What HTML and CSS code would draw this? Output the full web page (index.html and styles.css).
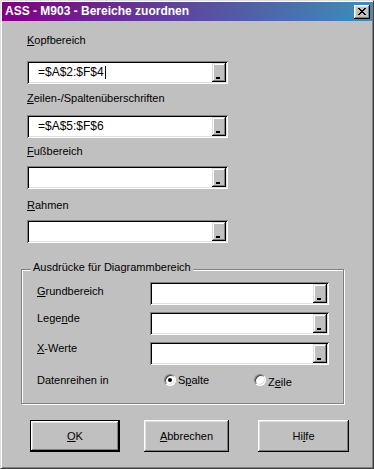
FILE: index.html
```html
<!DOCTYPE html>
<html lang="de">
<head>
  <meta charset="UTF-8">
  <title>ASS - M903 - Bereiche zuordnen</title>
  <link rel="stylesheet" href="styles.css">
</head>
<body>

<div class="window">
  <div class="titlebar">
    <span class="title">ASS - M903 - Bereiche zuordnen</span>
    <span class="close-btn">
      <svg width="8" height="7" viewBox="0 0 8 7">
        <path d="M0 0h2v1h-2z M6 0h2v1h-2z M1 1h2v1h-2z M5 1h2v1h-2z M2 2h4v1h-4z M3 3h2v1h-2z M2 4h4v1h-4z M1 5h2v1h-2z M5 5h2v1h-2z M0 6h2v1h-2z M6 6h2v1h-2z" fill="#000"/>
      </svg>
    </span>
  </div>

  <div class="content">
    <!-- Kopf / Ueberschriften / Fuss / Rahmen -->
    <div class="label l1"><u>K</u>opfbereich</div>
    <div class="refedit wide i1">
      <span class="value">=$A$2:$F$4<span class="caret"></span></span>
      <span class="pick"><i></i></span>
    </div>

    <div class="label l2"><u>Z</u>eilen-/Spaltenüberschriften</div>
    <div class="refedit wide i2">
      <span class="value">=$A$5:$F$6</span>
      <span class="pick"><i></i></span>
    </div>

    <div class="label l3"><u>F</u>ußbereich</div>
    <div class="refedit wide i3">
      <span class="value"></span>
      <span class="pick"><i></i></span>
    </div>

    <div class="label l4"><u>R</u>ahmen</div>
    <div class="refedit wide i4">
      <span class="value"></span>
      <span class="pick"><i></i></span>
    </div>

    <!-- Diagrammbereich -->
    <div class="group">
      <span class="legend">Ausdrücke für Diagrammbereich</span>
      <div class="group-grid">
        <div class="grid-label first"><u>G</u>rundbereich</div>
        <div class="refedit small">
          <span class="value"></span>
          <span class="pick"><i></i></span>
        </div>
        <div class="grid-label">Lege<u>n</u>de</div>
        <div class="refedit small">
          <span class="value"></span>
          <span class="pick"><i></i></span>
        </div>
        <div class="grid-label"><u>X</u>-Werte</div>
        <div class="refedit small">
          <span class="value"></span>
          <span class="pick"><i></i></span>
        </div>
      </div>
      <div class="series-row">
        <span class="series-label">Datenreihen in</span>
        <span class="option first"><span class="radio checked"></span><span>S<u>p</u>alte</span></span>
        <span class="option second"><span class="radio"></span><span>Z<u>e</u>ile</span></span>
      </div>
    </div>

    <div class="buttons">
      <button class="btn default ok"><u>O</u>K</button>
      <button class="btn cancel"><u>A</u>bbrechen</button>
      <button class="btn help">Hi<u>l</u>fe</button>
    </div>
  </div>
</div>

</body>
</html>
```

FILE: styles.css
```css
body {
  margin: 0;
  background-color: #c0c0c0;
  font-family: "Liberation Sans", Arial, sans-serif;
  font-size: 11px;
  color: #000;
}

.window {
  width: 374px;
  height: 469px;
  box-sizing: border-box;
  padding: 1px;
  background-color: #c0c0c0;
  border: 1px solid;
  border-color: #dfdfdf #404040 #404040 #dfdfdf;
  box-shadow: inset 1px 1px #fff, inset -1px -1px #808080;
}

/* title bar */
.titlebar {
  display: flex;
  align-items: center;
  justify-content: space-between;
  height: 19px;
  padding: 0 2px 0 3px;
  background: linear-gradient(90deg, #800080 0%, #3a8fbb 100%);
}

.title {
  color: #fff;
  font-weight: bold;
  font-size: 12px;
  line-height: 19px;
}

.close-btn {
  display: flex;
  align-items: center;
  justify-content: center;
  width: 16px;
  height: 14px;
  box-sizing: border-box;
  background-color: #c0c0c0;
  box-shadow: inset -1px -1px #000, inset 1px 1px #fff, inset -2px -2px #808080, inset 2px 2px #dfdfdf;
}

.close-btn svg {
  display: block;
  margin-left: -1px;
}

/* content */
.content {
  padding: 13px 0 0 25px;
}

.label {
  line-height: 13px;
  height: 13px;
  white-space: nowrap;
}

.l2 { margin-top: 8px; }
.l3 { margin-top: 7px; }
.l4 { margin-top: 10px; }

.i1 { margin-top: 14px; }
.i2 { margin-top: 10px; }
.i3 { margin-top: 8px; }
.i4 { margin-top: 8px; }

.refedit {
  display: flex;
  height: 23px;
  box-sizing: border-box;
  padding: 2px;
  background-color: #fff;
  box-shadow: inset 1px 1px #808080, inset -1px -1px #fff, inset 2px 2px #000, inset -2px -2px #dfdfdf;
}

.refedit.wide {
  width: 201px;
}

.refedit.small {
  width: 179px;
}

.value {
  flex: 1;
  display: flex;
  align-items: center;
  padding-left: 9px;
  font-size: 12px;
  line-height: 19px;
  white-space: nowrap;
}

.caret {
  display: inline-block;
  width: 1px;
  height: 13px;
  margin-left: 1px;
  background-color: #000;
}

.pick {
  position: relative;
  width: 14px;
  height: 19px;
  background-color: #c0c0c0;
  box-shadow: inset -1px -1px #000, inset 1px 1px #dfdfdf, inset -2px -2px #808080, inset 2px 2px #fff;
}

.pick i {
  position: absolute;
  left: 4px;
  top: 14px;
  width: 4px;
  height: 2px;
  background-color: #000;
}

/* group box */
.group {
  position: relative;
  width: 323px;
  margin: 26px 0 0 -6px;
  box-sizing: border-box;
  padding: 12px 0 14px 15px;
  border: 1px solid #808080;
  box-shadow: inset 1px 1px #fff, 1px 1px #fff;
}

.legend {
  position: absolute;
  top: -9px;
  left: 9px;
  padding: 0 2px;
  line-height: 13px;
  background-color: #c0c0c0;
  white-space: nowrap;
}

.group-grid {
  display: grid;
  grid-template-columns: 113px 179px;
  grid-auto-rows: 23px;
  row-gap: 7px;
}

.grid-label {
  line-height: 13px;
}

.grid-label.first {
  padding-top: 3px;
}

.series-row {
  display: flex;
  align-items: flex-start;
  margin-top: 9px;
  line-height: 13px;
}

.series-label {
  width: 127px;
}

.option {
  display: flex;
  align-items: flex-start;
  gap: 2px;
}

.option.first {
  width: 90px;
}

.option.second {
  padding-top: 2px;
}

.radio {
  position: relative;
  width: 12px;
  height: 12px;
  box-sizing: border-box;
  border-radius: 50%;
  background-color: #fff;
  border: 1px solid;
  border-color: #808080 #fff #fff #808080;
  box-shadow: inset 1px 1px #404040, inset -1px -1px #dfdfdf;
}

.option.second .radio {
  margin-top: -2px;
}

.radio.checked::after {
  content: "";
  position: absolute;
  left: 3px;
  top: 3px;
  width: 4px;
  height: 4px;
  border-radius: 50%;
  background-color: #000;
}

/* buttons */
.buttons {
  display: flex;
  margin-top: 16px;
  padding-left: 3px;
}

.btn {
  height: 32px;
  padding: 0;
  border: none;
  background-color: #c0c0c0;
  font-family: "Liberation Sans", Arial, sans-serif;
  font-size: 11px;
  color: #000;
  box-shadow: inset -1px -1px #000, inset 1px 1px #fff, inset -2px -2px #808080, inset 2px 2px #dfdfdf;
}

.btn.default {
  box-shadow: inset 0 0 0 1px #000, inset -2px -2px #000, inset 2px 2px #fff, inset -3px -3px #808080, inset 3px 3px #dfdfdf;
}

.ok { width: 90px; }
.cancel { width: 85px; margin-left: 24px; }
.help { width: 91px; margin-left: 29px; }
```
